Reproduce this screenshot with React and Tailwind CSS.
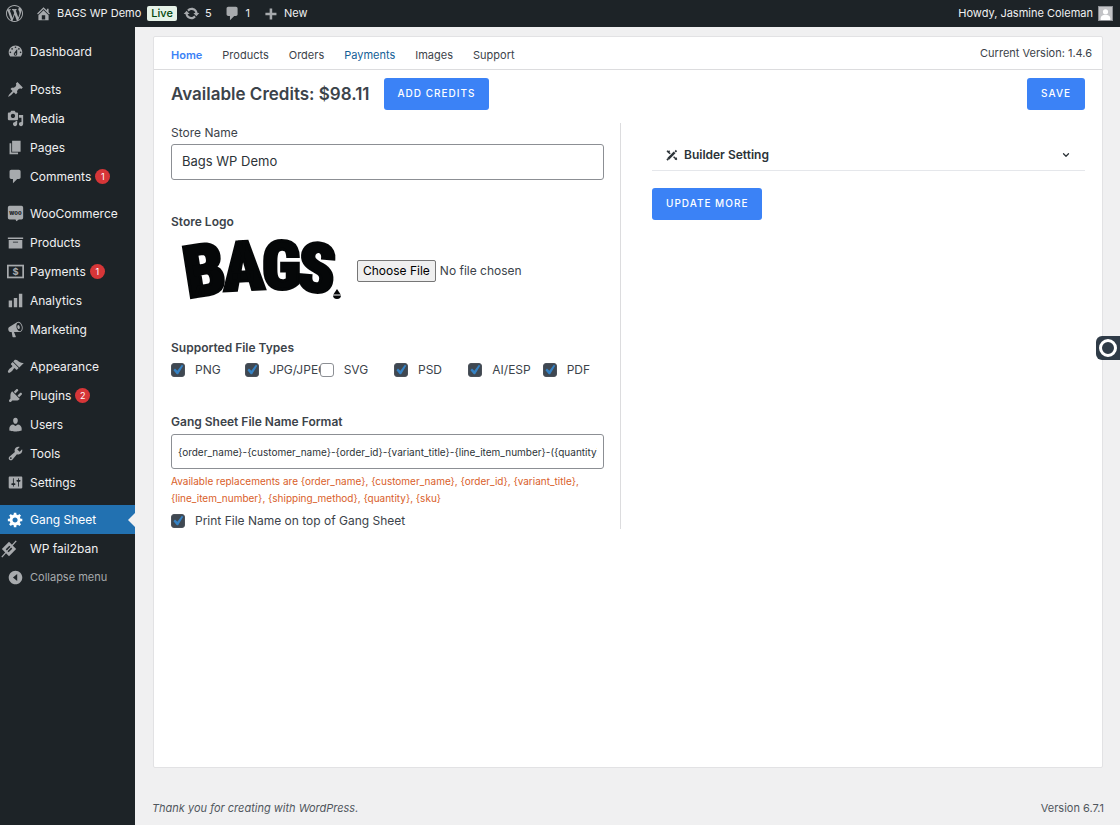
import { ChevronDown } from "lucide-react";

const icons = {
  wordpress:
    "M20 10c0-5.51-4.49-10-10-10C4.48 0 0 4.49 0 10c0 5.52 4.48 10 10 10 5.51 0 10-4.48 10-10zM7.78 15.37L4.37 6.22c.55-.02 1.17-.08 1.17-.08.5-.06.44-1.13-.06-1.11 0 0-1.45.11-2.37.11-.18 0-.37 0-.58-.01C4.12 2.69 6.87 1.11 10 1.11c2.33 0 4.45.87 6.05 2.34-.68-.11-1.65.39-1.65 1.58 0 .74.45 1.36.9 2.1.35.61.55 1.36.55 2.46 0 1.49-1.4 5-1.4 5l-3.03-8.37c.54-.02.82-.17.82-.17.5-.05.44-1.25-.06-1.22 0 0-1.44.12-2.38.12-.87 0-2.33-.12-2.33-.12-.5-.03-.56 1.2-.06 1.22l.92.08 1.26 3.41zM17.41 10c.24-.64.74-1.87.43-4.25.7 1.29 1.05 2.71 1.05 4.25 0 3.29-1.73 6.24-4.4 7.78.97-2.59 1.94-5.2 2.92-7.78zM6.1 18.09C3.12 16.65 1.11 13.53 1.11 10c0-1.3.23-2.48.72-3.59C3.25 10.3 4.67 14.2 6.1 18.09zm4.03-6.63l2.58 6.98c-.86.29-1.76.45-2.71.45-.79 0-1.57-.11-2.29-.33.81-2.38 1.62-4.74 2.42-7.1z",
  home: "M16 8.5l1.53 1.53-1.06 1.06L10 4.6l-6.47 6.49-1.06-1.06L10 2.5l4 4v-2h2v4zm-6-2.46l6 5.99V18H4v-5.97zM12 17v-5H8v5h4z",
  update:
    "M10.2 3.28c3.53 0 6.43 2.61 6.92 6h2.08l-3.5 4-3.5-4h2.32c-.45-1.97-2.21-3.45-4.32-3.45-1.45 0-2.73.71-3.54 1.78L4.95 5.66C6.23 4.2 8.11 3.28 10.2 3.28zm-.4 13.44c-3.52 0-6.43-2.61-6.92-6H.8l3.5-4c1.17 1.33 2.33 2.67 3.5 4H5.48c.45 1.97 2.21 3.45 4.32 3.45 1.45 0 2.73-.71 3.54-1.78l1.71 1.95c-1.28 1.46-3.15 2.38-5.25 2.38z",
  comment: "M5 2h9c1.1 0 2 .9 2 2v7c0 1.1-.9 2-2 2h-2l-5 5v-5H5c-1.1 0-2-.9-2-2V4c0-1.1.9-2 2-2z",
  plus: "M17 9v3h-5v5H9v-5H4V9h5V4h3v5h5z",
  dashboard:
    "M3.76 16h12.48c1.1-1.37 1.76-3.11 1.76-5 0-4.42-3.58-8-8-8s-8 3.58-8 8c0 1.89.66 3.63 1.76 5zM10 4c.55 0 1 .45 1 1s-.45 1-1 1-1-.45-1-1 .45-1 1-1zM6 6c.55 0 1 .45 1 1s-.45 1-1 1-1-.45-1-1 .45-1 1-1zm8 0c.55 0 1 .45 1 1s-.45 1-1 1-1-.45-1-1 .45-1 1-1zm-5.37 5.55L12 7v6c0 1.1-.9 2-2 2s-2-.9-2-2c0-.57.24-1.08.63-1.45zM4 10c.55 0 1 .45 1 1s-.45 1-1 1-1-.45-1-1 .45-1 1-1zm12 0c.55 0 1 .45 1 1s-.45 1-1 1-1-.45-1-1 .45-1 1-1zm-5 3c0-.55-.45-1-1-1s-1 .45-1 1 .45 1 1 1 1-.45 1-1z",
  pin: "M10.44 3.02l1.82-1.82 6.36 6.35-1.83 1.82c-1.05-.68-2.48-.57-3.41.36l-.75.75c-.92.93-1.04 2.35-.35 3.41l-1.83 1.82-2.41-2.41-2.8 2.79c-.42.42-3.38 2.71-3.8 2.29s1.86-3.39 2.28-3.81l2.79-2.79L4.1 9.36l1.83-1.82c1.05.69 2.48.57 3.4-.36l.75-.75c.93-.92 1.05-2.35.36-3.41z",
  media:
    "M13 11V4c0-.55-.45-1-1-1h-1.67L9 1H5L3.67 3H2c-.55 0-1 .45-1 1v7c0 .55.45 1 1 1h10c.55 0 1-.45 1-1zM7 4.5c1.38 0 2.5 1.12 2.5 2.5S8.38 9.5 7 9.5 4.5 8.38 4.5 7 5.62 4.5 7 4.5zM14 6h5v10.5c0 1.38-1.12 2.5-2.5 2.5S14 17.88 14 16.5s1.12-2.5 2.5-2.5c.17 0 .34.02.5.05V9h-3V6zm-4 8.05V13h2v3.5c0 1.38-1.12 2.5-2.5 2.5S7 17.88 7 16.5 8.12 14 9.5 14c.17 0 .34.02.5.05z",
  pages: "M6 15V2h10v13H6zm-1 1h8v2H3V5h2v11z",
  archive: "M19 4v2H1V4h18zM2 7h16v10H2V7zm11 3V9H7v1h6z",
  chart: "M18 18V2h-4v16h4zm-6 0V7H8v11h4zm-6 0v-8H2v8h4z",
  megaphone:
    "M18.15 5.94c.46 1.62.38 3.22-.02 4.48-.42 1.28-1.26 2.18-2.3 2.48-.16.06-.26.06-.4.06-.06.02-.12.02-.18.02-.06.02-.14.02-.22.02h-6.8l2.22 5.5c.02.14-.06.26-.14.34-.08.1-.24.16-.34.16H6.95c-.1 0-.26-.06-.34-.16-.08-.08-.16-.2-.14-.34l-1-5.5H4.25l-.02-.02c-.5.06-1.08-.18-1.54-.62s-.88-1.08-1.06-1.88c-.24-.8-.2-1.56-.02-2.2.18-.62.58-1.08 1.06-1.3l.02-.02 9-5.4c.1-.06.18-.1.24-.16.06-.04.14-.08.24-.12.16-.08.28-.12.5-.18 1.04-.3 2.24.1 3.22.98s1.84 2.24 2.26 3.86zm-2.58 5.98h-.02c.4-.1.74-.34 1.04-.7.58-.7.86-1.76.86-3.04 0-.64-.1-1.3-.28-1.98-.34-1.36-1.02-2.5-1.78-3.24s-1.68-1.1-2.46-.88c-.82.22-1.4.96-1.7 2-.32 1.04-.28 2.36.06 3.72.38 1.36 1 2.5 1.8 3.24.78.74 1.62 1.1 2.48.88zm-2.54-7.08c.22-.04.42-.02.62.04.38.16.76.48 1.02 1s.42 1.2.42 1.78c0 .3-.04.56-.12.8-.18.48-.44.84-.86.94-.34.1-.8-.06-1.14-.4s-.64-.86-.78-1.5c-.18-.62-.12-1.24.02-1.72s.48-.84.82-.94z",
  brush:
    "M14.48 11.06L7.41 3.99l1.5-1.5c.5-.56 2.3-.47 3.51.32 1.21.8 1.43 1.28 2.91 2.1 1.18.64 2.45 1.26 4.45.85zm-.71.71L6.7 4.7 4.93 6.47c-.39.39-.39 1.02 0 1.41l1.06 1.06c.39.39.39 1.03 0 1.42-.6.6-1.43 1.11-2.21 1.69-.35.26-.7.53-1.01.84C1.43 14.23.4 16.08 1.4 17.07c.99 1 2.84-.03 4.18-1.36.31-.31.58-.66.85-1.02.57-.78 1.08-1.61 1.69-2.21.39-.39 1.02-.39 1.41 0l1.06 1.06c.39.39 1.02.39 1.41 0z",
  plug: "M13.11 4.36L9.87 7.6 8 5.73l3.24-3.24c.35-.34 1.05-.2 1.56.32.52.51.66 1.21.31 1.55zm-8 1.77l.91-1.12 9.01 9.01-1.19.84c-.71.71-2.63 1.16-3.82 1.16H6.14L4.9 17.26c-.59.59-1.54.59-2.12 0-.59-.58-.59-1.53 0-2.12l1.24-1.24v-3.88c0-1.13.4-3.19 1.09-3.89zm7.26 3.97l3.24-3.24c.34-.35 1.04-.21 1.55.31.52.51.66 1.21.31 1.55l-3.24 3.25z",
  user: "M10 9.25c-2.27 0-2.73-3.44-2.73-3.44C7 4.02 7.82 2 9.97 2c2.16 0 2.98 2.02 2.71 3.81 0 0-.41 3.44-2.68 3.44zm0 2.57L12.72 10c2.39 0 4.52 2.33 4.52 4.53v2.49s-3.65 1.13-7.24 1.13c-3.65 0-7.24-1.13-7.24-1.13v-2.49c0-2.25 1.94-4.48 4.47-4.48z",
  wrench:
    "M16.68 9.77c-1.34 1.34-3.3 1.67-4.95.99l-5.41 6.52c-.99.99-2.59.99-3.58 0s-.99-2.59 0-3.57l6.52-5.42c-.68-1.65-.35-3.61.99-4.95 1.28-1.28 3.12-1.62 4.72-1.06l-2.89 2.89 2.82 2.82 2.86-2.87c.53 1.58.18 3.39-1.08 4.65zM3.81 16.21c.4.39 1.04.39 1.43 0 .4-.4.4-1.04 0-1.43-.39-.4-1.03-.4-1.43 0-.39.39-.39 1.03 0 1.43z",
  sliders:
    "M18 16V4c0-.55-.45-1-1-1H3c-.55 0-1 .45-1 1v12c0 .55.45 1 1 1h14c.55 0 1-.45 1-1zM8 11h1c.55 0 1 .45 1 1s-.45 1-1 1H8v1.5c0 .28-.22.5-.5.5s-.5-.22-.5-.5V13H6c-.55 0-1-.45-1-1s.45-1 1-1h1V5.5c0-.28.22-.5.5-.5s.5.22.5.5V11zm5-2h-1c-.55 0-1-.45-1-1s.45-1 1-1h1V5.5c0-.28.22-.5.5-.5s.5.22.5.5V7h1c.55 0 1 .45 1 1s-.45 1-1 1h-1v5.5c0 .28-.22.5-.5.5s-.5-.22-.5-.5V9z",
  gear: "M18 12h-2.18c-.17.7-.44 1.35-.81 1.93l1.54 1.54-2.1 2.1-1.54-1.54c-.58.36-1.23.63-1.91.79V19H8v-2.18c-.68-.16-1.33-.43-1.91-.79l-1.54 1.54-2.12-2.12 1.54-1.54c-.36-.58-.63-1.23-.79-1.91H1V9.03h2.17c.16-.7.44-1.35.8-1.94L2.43 5.55l2.1-2.1 1.54 1.54c.58-.37 1.24-.64 1.93-.81V2h3v2.18c.68.16 1.33.43 1.91.79l1.54-1.54 2.12 2.12-1.54 1.54c.36.59.64 1.24.8 1.94H18V12zm-8.5 1.5c1.66 0 3-1.34 3-3s-1.34-3-3-3-3 1.34-3 3 1.34 3 3 3z",
  collapse: "M10 2c4.42 0 8 3.58 8 8s-3.58 8-8 8-8-3.58-8-8 3.58-8 8-8zm2 12V6l-5 4z",
};

const menuGroups = [
  [{ label: "Dashboard", icon: "dashboard" }],
  [
    { label: "Posts", icon: "pin" },
    { label: "Media", icon: "media" },
    { label: "Pages", icon: "pages" },
    { label: "Comments", icon: "comment", count: 1 },
  ],
  [
    { label: "WooCommerce", icon: "woo" },
    { label: "Products", icon: "archive" },
    { label: "Payments", icon: "payments", count: 1 },
    { label: "Analytics", icon: "chart" },
    { label: "Marketing", icon: "megaphone" },
  ],
  [
    { label: "Appearance", icon: "brush" },
    { label: "Plugins", icon: "plug", count: 2 },
    { label: "Users", icon: "user" },
    { label: "Tools", icon: "wrench" },
    { label: "Settings", icon: "sliders" },
  ],
  [
    { label: "Gang Sheet", icon: "gear", current: true },
    { label: "WP fail2ban", icon: "fail2ban" },
  ],
];

const tabs = ["Home", "Products", "Orders", "Payments", "Images", "Support"];

const fileTypes = [
  { label: "PNG", checked: true },
  { label: "JPG/JPEG", checked: true },
  { label: "SVG", checked: false },
  { label: "PSD", checked: true },
  { label: "AI/ESP", checked: true },
  { label: "PDF", checked: true },
];

function Icon({ name, className = "size-[17px]" }) {
  return (
    <svg viewBox="0 0 20 20" fill="currentColor" fillRule="evenodd" className={className} aria-hidden="true">
      <path d={icons[name]} />
    </svg>
  );
}

function MenuIcon({ name }) {
  if (name === "woo") {
    return (
      <svg viewBox="0 0 20 20" className="size-[17px]" aria-hidden="true">
        <path d="M3 1h14a2 2 0 0 1 2 2v12a2 2 0 0 1-2 2h-3l-3 2-1-2H3a2 2 0 0 1-2-2V3a2 2 0 0 1 2-2z" fill="currentColor" />
        <text x="10" y="12" textAnchor="middle" fontSize="7" fontWeight="800" fill="#1d2327">
          woo
        </text>
      </svg>
    );
  }
  if (name === "payments") {
    return (
      <svg viewBox="0 0 20 20" fill="none" stroke="currentColor" className="size-[17px]" aria-hidden="true">
        <rect x="1" y="3" width="18" height="14" strokeWidth="2" />
        <text x="10" y="14" textAnchor="middle" fontSize="11" fontWeight="700" fill="currentColor" stroke="none">
          $
        </text>
      </svg>
    );
  }
  if (name === "fail2ban") {
    return (
      <svg viewBox="0 0 20 20" className="mr-3 size-[18px]" aria-hidden="true">
        <path d="M10 2l8 8-8 8-8-8z" fill="currentColor" />
        <path d="M18 1L2 19" stroke="currentColor" strokeWidth="1.5" />
        <path d="M7 11l4-4M9 13l4-4" stroke="#1d2327" strokeWidth="1.7" />
      </svg>
    );
  }
  return <Icon name={name} />;
}

function MenuItem({ label, icon, count, current }) {
  return (
    <li>
      <a
        href="#"
        aria-current={current ? "page" : undefined}
        className={`relative flex h-[29px] items-center text-xs ${current ? "bg-[#2271b1] text-white" : "text-[#f0f0f1]"}`}
      >
        <span className={`flex w-[30px] justify-center ${current ? "text-white" : "text-[#a7aaad]"}`}>
          <MenuIcon name={icon} />
        </span>
        {label}
        {count && (
          <span className="ml-1 flex size-[15px] items-center justify-center rounded-full bg-[#d63638] text-[9px] text-white">
            {count}
          </span>
        )}
        {current && (
          <span className="absolute right-0 border-y-[7px] border-r-[7px] border-y-transparent border-r-[#f0f0f1]" />
        )}
      </a>
    </li>
  );
}

function AdminBar() {
  return (
    <header className="flex h-[27px] items-center bg-[#1d2327] pr-[7px] text-[11px] text-[#f0f0f1]">
      <a href="#" aria-label="About WordPress" className="flex w-[29px] justify-center text-[#a7aaad]">
        <Icon name="wordpress" />
      </a>
      <a href="#" className="ml-1.5 flex items-center gap-[5px]">
        <Icon name="home" className="size-[17px] text-[#a7aaad]" />
        BAGS WP Demo
      </a>
      <a href="#" className="ml-1.5 rounded-xs bg-[#e6f2e8] px-1 leading-[15px] font-medium text-[#00450c]">
        Live
      </a>
      <a href="#" className="ml-1.5 flex items-center gap-[5px]">
        <Icon name="update" className="size-[17px] text-[#a7aaad]" />5
      </a>
      <a href="#" className="ml-3 flex items-center gap-[5px]">
        <Icon name="comment" className="size-[17px] text-[#a7aaad]" />1
      </a>
      <a href="#" className="ml-3 flex items-center gap-[5px]">
        <Icon name="plus" className="size-[17px] text-[#a7aaad]" />
        New
      </a>
      <a href="#" className="ml-auto flex items-center gap-[5px]">
        Howdy, Jasmine Coleman
        <svg viewBox="0 0 15 15" className="size-[15px] border border-[#8c8f94] bg-[#c3c4c7]" aria-hidden="true">
          <circle cx="7.5" cy="5.5" r="3" fill="#fff" />
          <path d="M2 15v-2c0-2.500 2-4 5.500-4s5.500 1.500 5.500 4v2z" fill="#fff" />
        </svg>
      </a>
    </header>
  );
}

function Sidebar() {
  return (
    <nav aria-label="Main menu" className="w-[135px] shrink-0 bg-[#1d2327] pt-2.5">
      {menuGroups.map((group, i) => (
        <ul key={group[0].label} className={i === 0 ? "mb-[9px]" : i === menuGroups.length - 1 ? "" : "mb-2"}>
          {group.map((item) => (
            <MenuItem key={item.label} {...item} />
          ))}
        </ul>
      ))}
      <button type="button" className="flex h-[29px] w-full items-center text-[11px] text-[#a7aaad]">
        <span className="flex w-[30px] justify-center">
          <Icon name="collapse" />
        </span>
        Collapse menu
      </button>
    </nav>
  );
}

function PrimaryButton({ children }) {
  return (
    <button
      type="button"
      className="h-8 rounded-[3px] bg-[#3b82f6] px-3.5 text-[10px] font-medium tracking-widest text-white uppercase"
    >
      {children}
    </button>
  );
}

function Checkbox({ label, defaultChecked }) {
  return (
    <label className="flex items-center gap-2.5 whitespace-nowrap">
      <span className="grid shrink-0 bg-white">
        <input
          type="checkbox"
          defaultChecked={defaultChecked}
          className="peer col-start-1 row-start-1 size-3.5 appearance-none rounded-[3px] border border-[#8c8f94] bg-white checked:border-[#4b5159] checked:bg-[#3f4852]"
        />
        <svg
          viewBox="0 0 20 20"
          className="pointer-events-none invisible col-start-1 row-start-1 size-3.5 peer-checked:visible"
          aria-hidden="true"
        >
          <path d="M15.500 2.500l2 1.500-7.300 12H8.300L3.500 10.300l2.200-2.300 3.400 3z" fill="#3582c4" />
        </svg>
      </span>
      {label}
    </label>
  );
}

function StoreLogo() {
  return (
    <svg
      viewBox="0 0 170 78"
      className="h-[78px] w-[170px]"
      role="img"
      aria-label="Bags logo"
      fontFamily="'Roboto Condensed', Roboto, sans-serif"
      fontWeight="900"
      fill="#050708"
      stroke="#050708"
      strokeWidth="3"
    >
      <text x="17" y="66" fontSize="72" transform="rotate(-9 17 66)">B</text>
      <text x="53" y="59" fontSize="68" transform="rotate(-3 53 59)">A</text>
      <text x="91" y="57" fontSize="66">G</text>
      <text x="125" y="58" fontSize="68" transform="rotate(5 125 58)">S</text>
      <path d="M166 57l4 6a4 4 0 1 1-8 0z" stroke="none" />
      <path d="M162 63h8" stroke="#fff" strokeWidth="1" />
    </svg>
  );
}

function StoreSettings() {
  return (
    <form className="-mr-[17px] border-r border-[#dcdcde] pr-4">
      <label htmlFor="store-name" className="block leading-[19px]">
        Store Name
      </label>
      <input
        id="store-name"
        type="text"
        defaultValue="Bags WP Demo"
        className="mt-0.5 block h-9 w-full rounded-[3px] border border-[#8c8f94] px-2.5 pb-0.5 text-[13px] text-[#2c3338]"
      />

      <label htmlFor="store-logo" className="mt-8 block leading-5 font-semibold">
        Store Logo
      </label>
      <div className="flex items-center gap-4">
        <StoreLogo />
        <input
          id="store-logo"
          type="file"
          className="min-w-0 flex-1 text-xs file:mr-1 file:h-[22px] file:rounded-xs file:border file:border-solid file:border-[#767676] file:bg-[#efefef] file:px-[5px] file:text-black"
        />
      </div>

      <fieldset className="mt-7">
        <legend className="leading-5 font-semibold">Supported File Types</legend>
        <div className="mt-1 grid grid-cols-6 gap-[13px]">
          {fileTypes.map(({ label, checked }) => (
            <Checkbox key={label} label={label} defaultChecked={checked} />
          ))}
        </div>
      </fieldset>

      <label htmlFor="name-format" className="mt-[34px] block leading-5 font-semibold">
        Gang Sheet File Name Format
      </label>
      <input
        id="name-format"
        type="text"
        defaultValue="{order_name}-{customer_name}-{order_id}-{variant_title}-{line_item_number}-({quantity})"
        className="mt-0.5 block h-[35px] w-full rounded-[3px] border border-[#8c8f94] px-1.5 text-[10px] text-[#2c3338]"
      />
      <p className="mt-1 mb-1.5 text-[10px] leading-[17px] text-[#d9602a]">
        Available replacements are {"{order_name}, {customer_name}, {order_id}, {variant_title}, {line_item_number}, {shipping_method}, {quantity}, {sku}"}
      </p>
      <Checkbox label="Print File Name on top of Gang Sheet" defaultChecked />
    </form>
  );
}

function BuilderPanel() {
  return (
    <section className="pt-[17px]">
      <button
        type="button"
        className="mb-[17px] flex h-[31px] w-full items-center border-b border-[#e5e7eb] px-3.5 font-semibold text-[#2c3338]"
      >
        <svg viewBox="0 0 12 12" fill="none" stroke="currentColor" className="size-3" aria-hidden="true">
          <path d="M2.200 9.800L8.600 3.400" strokeWidth="2.400" />
          <path d="M9.200 2.800l1.300-1.300M1 11l1.200-1.200" strokeWidth="1.800" />
          <path d="M1 1.800l3.200 3M1.800 3.800l1.800-2" strokeWidth="1.500" />
          <path d="M7.600 7.800l3.200 3M9 10.600l1.700-1.800" strokeWidth="1.500" />
        </svg>
        <span className="ml-1.5">Builder Setting</span>
        <ChevronDown size={10} strokeWidth={3} className="ml-auto" aria-hidden="true" />
      </button>
      <PrimaryButton>Update More</PrimaryButton>
    </section>
  );
}

function App() {
  return (
    <div className="flex min-h-screen flex-col bg-[#f0f0f1] font-['Inter',sans-serif] text-xs text-[#3c434a]">
      <AdminBar />
      <div className="flex flex-1">
        <Sidebar />
        <div className="flex min-w-0 flex-1 flex-col pt-[9px] pr-4 pl-[17px]">
          <main className="mx-px flex-1 rounded-xs border border-[#e2e2e4] bg-white">
            <div className="flex h-[33px] items-center justify-between border-b border-[#dcdcde] pr-2.5 pl-[17px] text-[11px]">
              <nav aria-label="Gang Sheet" className="flex gap-5 pt-1">
                {tabs.map((tab) => (
                  <a
                    key={tab}
                    href="#"
                    aria-current={tab === "Home" ? "page" : undefined}
                    className={
                      tab === "Home" ? "font-semibold text-[#3b82f6]" : tab === "Payments" ? "text-[#135e96]" : undefined
                    }
                  >
                    {tab}
                  </a>
                ))}
              </nav>
              <span>Current Version: 1.4.6</span>
            </div>
            <div className="px-[17px] pt-2">
              <div className="mb-[13px] flex items-center">
                <h1 className="mr-3.5 text-[17px] leading-8 font-semibold">Available Credits: $98.11</h1>
                <PrimaryButton>Add Credits</PrimaryButton>
                <div className="ml-auto">
                  <PrimaryButton>Save</PrimaryButton>
                </div>
              </div>
              <div className="grid grid-cols-2 gap-12">
                <StoreSettings />
                <BuilderPanel />
              </div>
            </div>
          </main>
          <footer className="flex h-[57px] items-end justify-between pb-2 text-[11px] leading-[17px] text-[#50575e]">
            <p className="italic">
              Thank you for creating with <a href="#">WordPress</a>.
            </p>
            <p>Version 6.7.1</p>
          </footer>
        </div>
      </div>
      <button
        type="button"
        aria-label="Open recorder"
        className="fixed top-[336px] right-0 flex h-6 w-6 items-center justify-center rounded-l-md bg-[#2f3b47]"
      >
        <span className="size-[18px] rounded-full border-[3px] border-white" />
      </button>
    </div>
  );
}

export default App;
